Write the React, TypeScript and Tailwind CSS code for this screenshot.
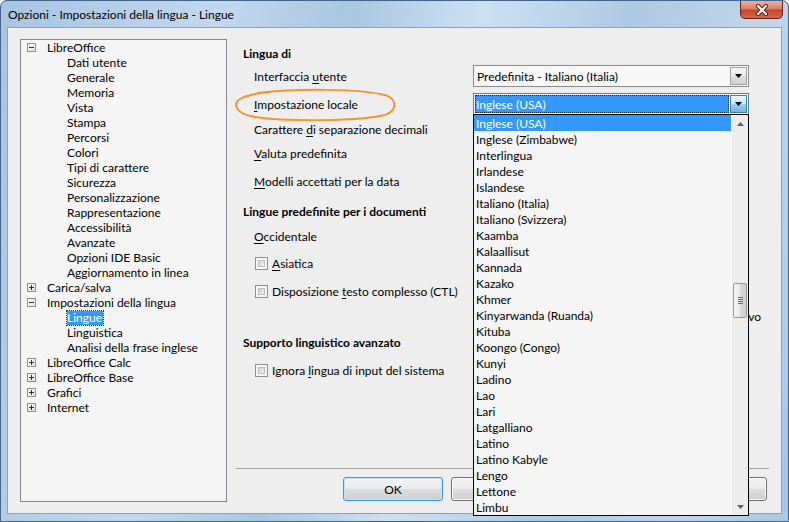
import React from 'react';

type TreeItem = { label: string; level: 0 | 1; exp?: '+' | '-'; selected?: boolean };

const tree: TreeItem[] = [
  { label: 'LibreOffice', level: 0, exp: '-' },
  { label: 'Dati utente', level: 1 },
  { label: 'Generale', level: 1 },
  { label: 'Memoria', level: 1 },
  { label: 'Vista', level: 1 },
  { label: 'Stampa', level: 1 },
  { label: 'Percorsi', level: 1 },
  { label: 'Colori', level: 1 },
  { label: 'Tipi di carattere', level: 1 },
  { label: 'Sicurezza', level: 1 },
  { label: 'Personalizzazione', level: 1 },
  { label: 'Rappresentazione', level: 1 },
  { label: 'Accessibilità', level: 1 },
  { label: 'Avanzate', level: 1 },
  { label: 'Opzioni IDE Basic', level: 1 },
  { label: 'Aggiornamento in linea', level: 1 },
  { label: 'Carica/salva', level: 0, exp: '+' },
  { label: 'Impostazioni della lingua', level: 0, exp: '-' },
  { label: 'Lingue', level: 1, selected: true },
  { label: 'Linguistica', level: 1 },
  { label: 'Analisi della frase inglese', level: 1 },
  { label: 'LibreOffice Calc', level: 0, exp: '+' },
  { label: 'LibreOffice Base', level: 0, exp: '+' },
  { label: 'Grafici', level: 0, exp: '+' },
  { label: 'Internet', level: 0, exp: '+' },
];

const langs = [
  'Inglese (USA)',
  'Inglese (Zimbabwe)',
  'Interlingua',
  'Irlandese',
  'Islandese',
  'Italiano (Italia)',
  'Italiano (Svizzera)',
  'Kaamba',
  'Kalaallisut',
  'Kannada',
  'Kazako',
  'Khmer',
  'Kinyarwanda (Ruanda)',
  'Kituba',
  'Koongo (Congo)',
  'Kunyi',
  'Ladino',
  'Lao',
  'Lari',
  'Latgalliano',
  'Latino',
  'Latino Kabyle',
  'Lengo',
  'Lettone',
  'Limbu',
];

const U = ({ children }: { children: React.ReactNode }) => (
  <span className="underline underline-offset-[2px] decoration-1">{children}</span>
);

const Expander = ({ sign }: { sign: '+' | '-' }) => (
  <div className="relative w-[9px] h-[9px] border border-[#919191] bg-[linear-gradient(135deg,#ffffff,#e0e0e0)] shrink-0">
    <div className="absolute left-[1px] top-[3px] w-[5px] h-px bg-[#333]" />
    {sign === '+' && <div className="absolute left-[3px] top-[1px] w-px h-[5px] bg-[#333]" />}
  </div>
);

const Tri = ({ up }: { up?: boolean }) => (
  <svg width="7" height="4" viewBox="0 0 7 4">
    <polygon points={up ? '0,4 7,4 3.5,0' : '0,0 7,0 3.5,4'} fill="#000" />
  </svg>
);

const DropBtn = ({ hot }: { hot?: boolean }) => (
  <div
    className={
      hot
        ? 'w-[17px] h-full border border-[#3c7fb1] bg-[linear-gradient(180deg,#e9f6fd_0%,#c6e6f7_50%,#9dd3f0_51%,#6fb6e0_100%)] flex items-center justify-center'
        : 'w-[17px] h-full border border-[#a3a3a3] bg-[linear-gradient(180deg,#f3f3f3_0%,#ececec_50%,#dedede_51%,#d0d0d0_100%)] flex items-center justify-center'
    }
  >
    <Tri />
  </div>
);

const Check = () => (
  <div className="w-[13px] h-[13px] border border-[#8f8f8f] bg-[#f6f6f6] p-[2px] shrink-0">
    <div className="w-full h-full border border-[#bdbdbd] bg-[linear-gradient(135deg,#cfcfcf,#f2f2f2)]" />
  </div>
);

const Btn = ({ label, def }: { label?: string; def?: boolean }) => (
  <div
    className={
      def
        ? 'w-[100px] h-[24px] rounded-[3px] border border-[#3399ff] shadow-[inset_0_0_0_1px_#bfe3f8] bg-[linear-gradient(180deg,#f3f3f3_0%,#ebebeb_50%,#dddddd_51%,#cfcfcf_100%)] flex items-center justify-center'
        : 'w-[100px] h-[24px] rounded-[3px] border border-[#707070] shadow-[inset_0_0_0_1px_#fcfcfc] bg-[linear-gradient(180deg,#f3f3f3_0%,#ebebeb_50%,#dddddd_51%,#cfcfcf_100%)] flex items-center justify-center'
    }
  >
    {label}
  </div>
);

export default function App() {
  return (
    <div className="relative w-[789px] h-[522px] overflow-hidden rounded-t-[7px] border border-[#43658c] bg-[linear-gradient(100deg,#a7c4e1_0%,#c2d8ee_25%,#a9c6e2_40%,#cde0f2_55%,#aec9e4_72%,#c0d6ec_88%,#aac6e2_100%)] flex flex-col font-['Lato',sans-serif] text-[12px] leading-[15px] text-black">
      {/* title bar */}
      <div className="h-[26px] shrink-0 flex justify-between">
        <div className="self-center pl-[7px] pt-[1px]">Opzioni - Impostazioni della lingua - Lingue</div>
        <div className="mr-[5px] w-[43px] h-[18px] rounded-b-[5px] border border-t-0 border-[#6e2216] bg-[linear-gradient(180deg,#eab0a2_0%,#dc7e69_45%,#c8442b_55%,#d2674d_100%)] flex items-center justify-center">
          <svg width="14" height="12" viewBox="0 0 14 12">
            <path d="M3 2 L11 10 M11 2 L3 10" stroke="#5a1a10" strokeWidth="4" strokeLinecap="round" />
            <path d="M3 2 L11 10 M11 2 L3 10" stroke="#ffffff" strokeWidth="2.2" strokeLinecap="round" />
          </svg>
        </div>
      </div>

      {/* client */}
      <div className="flex-1 min-h-0 mx-[6px] mb-[7px] border border-[#8aa3bd] bg-[#eeeeee] flex">
        {/* tree */}
        <div className="ml-[12px] mt-[11px] w-[207px] h-[463px] shrink-0 border border-[#828790] bg-[#f5f5f5] pl-[6px]">
          {tree.map((t) =>
            t.level === 0 ? (
              <div key={t.label} className="h-[15px] flex items-center">
                <Expander sign={t.exp!} />
                <span className="ml-[11px] whitespace-nowrap">{t.label}</span>
              </div>
            ) : (
              <div key={t.label} className="h-[15px] flex items-center pl-[40px]">
                {t.selected ? (
                  <span className="bg-[#3399ff] text-white outline outline-1 outline-dotted outline-[#1d3c5e] h-[14px] leading-[14px] pr-[1px]">{t.label}</span>
                ) : (
                  <span className="whitespace-nowrap">{t.label}</span>
                )}
              </div>
            )
          )}
        </div>

        {/* right side */}
        <div className="flex-1 flex flex-col pl-[9px] pr-[12px]">
          <div className="flex-1 flex flex-col pl-[7px] pt-[17px]">
            <div className="h-[16px] flex items-center font-bold">Lingua di</div>

            <div className="mt-[3px] h-[24px] flex items-center pl-[11px]">
              <div className="w-[219px]">
                Interfaccia <U>u</U>tente
              </div>
              <div className="w-[276px] h-[22px] border border-[#8b8b8b] bg-[#f7f7f7] flex p-px">
                <div className="flex-1 pl-[2px] flex items-center">Predefinita - Italiano (Italia)</div>
                <DropBtn />
              </div>
            </div>

            <div className="mt-[5px] h-[22px] flex items-center pl-[11px]">
              <div className="w-[219px]">
                <U>I</U>mpostazione locale
              </div>
              <div className="w-[276px] h-[22px] border border-[#5d7f9e] bg-[#f7f7f7] flex p-px">
                <div className="flex-1 mr-px bg-[#3399ff] text-white outline outline-1 outline-dotted outline-[#10243a] -outline-offset-1 pl-[1px] flex items-center">Inglese (USA)</div>
                <DropBtn hot />
              </div>
            </div>

            <div className="mt-[6px] h-[16px] flex items-center pl-[11px]">
              <span>
                Carattere <U>d</U>i separazione decimali
              </span>
            </div>
            <div className="mt-[8px] h-[16px] flex items-center pl-[11px]">
              <span>
                <U>V</U>aluta predefinita
              </span>
            </div>
            <div className="mt-[12px] h-[16px] flex items-center pl-[11px]">
              <span>
                <U>M</U>odelli accettati per la data
              </span>
            </div>

            <div className="mt-[14px] h-[16px] flex items-center font-bold">Lingue predefinite per i documenti</div>
            <div className="mt-[9px] h-[16px] flex items-center pl-[11px]">
              <span>
                <U>O</U>ccidentale
              </span>
            </div>
            <div className="mt-[11px] h-[16px] flex items-center pl-[12px] gap-[4px]">
              <Check />
              <span>
                <U>A</U>siatica
              </span>
            </div>
            <div className="mt-[12px] h-[16px] flex items-center pl-[12px] gap-[4px]">
              <Check />
              <span>
                Disposizione <U>t</U>esto complesso (CTL)
              </span>
            </div>
            <div className="mt-[9px] h-[16px] flex items-center justify-end pr-[8px] gap-[4px]">
              <Check />
              <span>Solo per il documento attivo</span>
            </div>

            <div className="mt-[10px] h-[16px] flex items-center font-bold">Supporto linguistico avanzato</div>
            <div className="mt-[12px] h-[16px] flex items-center pl-[12px] gap-[4px]">
              <Check />
              <span>
                Ignora <U>l</U>ingua di input del sistema
              </span>
            </div>
          </div>

          <div className="h-px bg-[#a0a0a0] shrink-0" />
          <div className="mt-[8px] mb-[12px] h-[24px] flex justify-end gap-[8px] pr-[2px] shrink-0">
            <Btn label="OK" def />
            <Btn />
            <Btn />
            <Btn />
          </div>
        </div>
      </div>

      {/* open drop-down list */}
      <div className="absolute left-[472px] top-[113px] w-[276px] h-[402px] border border-black bg-[#f5f5f5] flex">
        <div className="w-[257px] flex flex-col">
          {langs.map((l, i) => (
            <div
              key={l}
              className={
                i === 0
                  ? 'h-[16px] shrink-0 pl-[2px] flex items-center bg-[#3399ff] text-white'
                  : 'h-[16px] shrink-0 pl-[2px] flex items-center'
              }
            >
              {l}
            </div>
          ))}
        </div>
        <div className="w-[17px] bg-[#ededed] border-l border-[#f9f9f9] flex flex-col items-center">
          <div className="h-[17px] flex items-center justify-center opacity-60">
            <Tri up />
          </div>
          <div className="mt-[151px] w-[14px] h-[35px] rounded-[2px] border border-[#979797] bg-[linear-gradient(90deg,#f4f4f4_0%,#e9e9e9_50%,#d9d9d9_51%,#cfcfcf_100%)] flex flex-col items-center justify-center gap-[1px]">
            <div className="w-[5px] h-px bg-[#6b6b6b]" />
            <div className="w-[5px] h-px bg-[#6b6b6b]" />
            <div className="w-[5px] h-px bg-[#6b6b6b]" />
            <div className="w-[5px] h-px bg-[#6b6b6b]" />
          </div>
          <div className="flex-1" />
          <div className="h-[17px] flex items-center justify-center opacity-60">
            <Tri />
          </div>
        </div>
      </div>

      {/* hand-drawn orange mark */}
      <svg className="absolute -left-px -top-px pointer-events-none" width="789" height="522" viewBox="0 0 789 522">
        <path
          d="M258 93 C300 88 360 89 385 95 C397 99 398 110 385 115 C360 121 290 122 255 117 C236 114 232 104 240 99 C246 95 255 94 270 92"
          fill="none"
          stroke="#f39533"
          strokeWidth="2"
          strokeLinecap="round"
        />
      </svg>
    </div>
  );
}
